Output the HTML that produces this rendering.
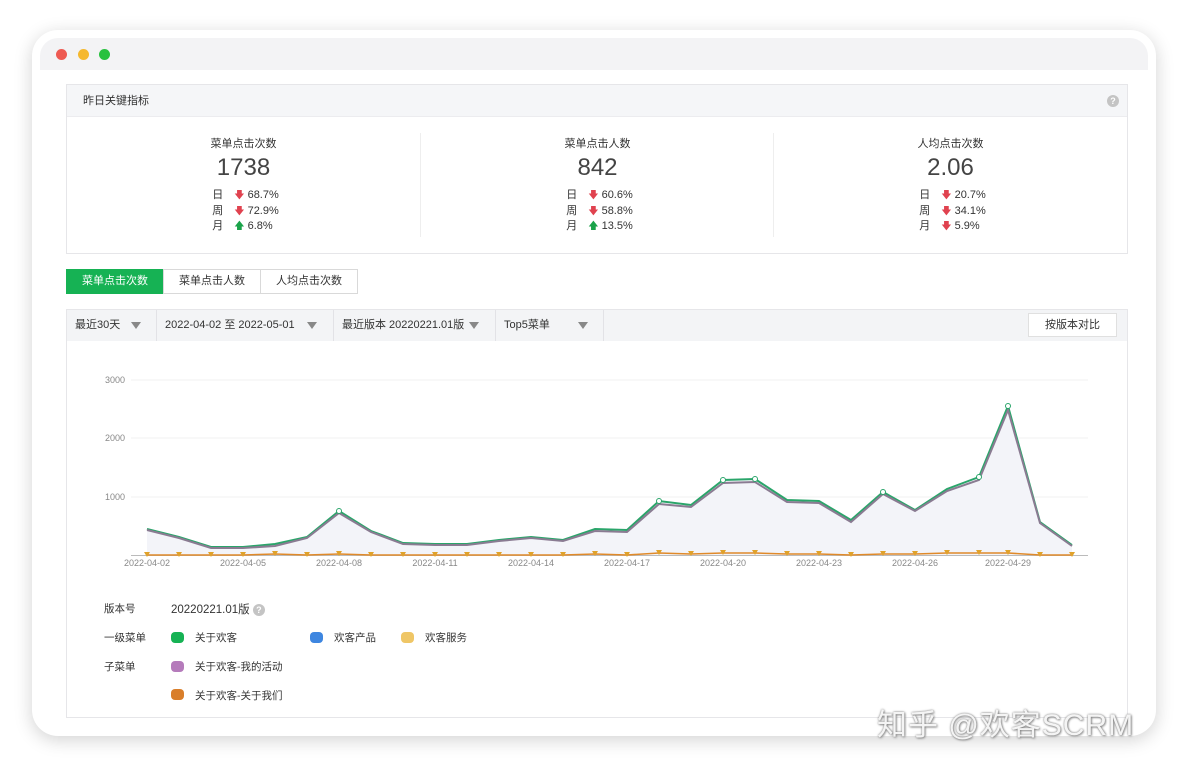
<!DOCTYPE html>
<html><head><meta charset="utf-8">
<style>
*{margin:0;padding:0;box-sizing:border-box}
body{width:1184px;height:766px;background:#fff;font-family:"Liberation Sans","Noto Sans CJK SC",sans-serif;color:#333;position:relative;overflow:hidden}
.frame{position:absolute;left:32px;top:30px;width:1124px;height:706px;background:#fff;border-radius:26px;box-shadow:0 4px 18px rgba(0,0,0,.18);overflow:hidden}
.bar{position:absolute;left:8px;top:8px;right:8px;height:32px;background:#f3f3f5;border-radius:18px 18px 0 0}
.dot{position:absolute;top:19px;width:11px;height:11px;border-radius:50%}
.panel{position:absolute;left:34px;top:54px;width:1062px;height:170px;border:1px solid #e6e6e9}
.ph{height:32px;background:#f5f6f8;border-bottom:1px solid #ececef;font-size:11px;line-height:32px;padding-left:16px;color:#333}
.q{position:absolute;right:8px;top:10px;width:12px;height:12px;border-radius:50%;background:#c4c4c4;color:#fff;font-size:9px;text-align:center;line-height:12px;font-weight:bold}
.col{position:absolute;top:32px;width:353px;height:137px;text-align:center}
.col .t{font-size:11px;margin-top:18px}
.col .n{font-size:24px;margin-top:3px;color:#444}
.rows{font-size:11px;line-height:15.5px;text-align:left;display:inline-block;white-space:nowrap;margin:6px 0 0 4px}
.rows b{font-weight:normal;display:inline-block;width:22px}
.dn{color:#e0424f;font-size:10px}.up{color:#1aa34a;font-size:10px}
.sep{position:absolute;top:48px;width:1px;height:104px;background:#eee}
.tabs{position:absolute;left:34px;top:239px;height:25px;display:flex;font-size:11px}
.tabs div{border:1px solid #d9d9d9;line-height:23px;padding:0 15px;margin-left:-1px;color:#333}
.tabs .a{background:#16b254;border-color:#16b254;color:#fff;margin-left:0}
.main{position:absolute;left:34px;top:279px;width:1062px;height:409px;border:1px solid #e6e6e9}
.fb{height:31px;background:#f3f4f6;display:flex;font-size:11px;line-height:31px;position:relative}
.fb div{padding:0 8px;border-right:1px solid #e2e2e6;position:relative}
.tri{display:inline-block;width:0;height:0;border-left:5px solid transparent;border-right:5px solid transparent;border-top:7px solid #888;vertical-align:middle}
.cmp{position:absolute;right:10px;top:3px;height:24px;background:#fff;border:1px solid #e0e0e0;line-height:22px;padding:0 16px;font-size:11px}
.lg{position:absolute;font-size:10.5px;color:#333}
.sw{position:absolute;width:13px;height:11px;border-radius:4px}
.wm{position:absolute;left:877px;top:700px;font-size:30px;color:#f4f4f4;text-shadow:0 0 2px #777,1px 1px 2px #999;letter-spacing:1px;font-family:"Liberation Sans","Noto Sans CJK SC",sans-serif}
</style></head><body>
<div class="frame">
<div class="bar"></div>
<div class="dot" style="left:24px;background:#ee5a52"></div>
<div class="dot" style="left:46px;background:#f5b82e"></div>
<div class="dot" style="left:67px;background:#28c13f"></div>
<div class="panel">
<div class="ph">昨日关键指标</div><div class="q">?</div>
<div class="col" style="left:0"><div class="t">菜单点击次数</div><div class="n">1738</div>
<div class="rows"><b>日</b><span class="dn">🡇</span> 68.7%<br><b>周</b><span class="dn">🡇</span> 72.9%<br><b>月</b><span class="up">🡅</span> 6.8%</div></div>
<div class="sep" style="left:353px"></div>
<div class="col" style="left:354px"><div class="t">菜单点击人数</div><div class="n">842</div>
<div class="rows"><b>日</b><span class="dn">🡇</span> 60.6%<br><b>周</b><span class="dn">🡇</span> 58.8%<br><b>月</b><span class="up">🡅</span> 13.5%</div></div>
<div class="sep" style="left:706px"></div>
<div class="col" style="left:707px"><div class="t">人均点击次数</div><div class="n">2.06</div>
<div class="rows"><b>日</b><span class="dn">🡇</span> 20.7%<br><b>周</b><span class="dn">🡇</span> 34.1%<br><b>月</b><span class="dn">🡇</span> 5.9%</div></div>
</div>
<div class="tabs"><div class="a">菜单点击次数</div><div>菜单点击人数</div><div>人均点击次数</div></div>
<div class="main">
<div class="fb">
<div style="width:90px">最近30天 <span class="tri" style="position:absolute;left:64px;top:12px"></span></div>
<div style="width:177px">2022-04-02 至 2022-05-01 <span class="tri" style="position:absolute;left:150px;top:12px"></span></div>
<div style="width:162px">最近版本 20220221.01版 <span class="tri" style="position:absolute;left:135px;top:12px"></span></div>
<div style="width:108px">Top5菜单 <span class="tri" style="position:absolute;left:82px;top:12px"></span></div>
<span class="cmp">按版本对比</span>
</div>
</div>
<div class="lg" style="left:72px;top:571px">版本号</div><div class="lg" style="left:139px;top:571px;font-size:11.5px">20220221.01版 <span style="display:inline-block;width:12px;height:12px;border-radius:50%;background:#c4c4c4;color:#fff;font-size:9px;text-align:center;line-height:12px;font-weight:bold">?</span></div>
<div class="lg" style="left:72px;top:600px">一级菜单</div>
<div class="sw" style="left:139px;top:602px;background:#16b254"></div><div class="lg" style="left:163px;top:600px">关于欢客</div>
<div class="sw" style="left:278px;top:602px;background:#3e86e0"></div><div class="lg" style="left:302px;top:600px">欢客产品</div>
<div class="sw" style="left:369px;top:602px;background:#efc666"></div><div class="lg" style="left:393px;top:600px">欢客服务</div>
<div class="lg" style="left:72px;top:629px">子菜单</div>
<div class="sw" style="left:139px;top:631px;background:#b57bbb"></div><div class="lg" style="left:163px;top:629px">关于欢客-我的活动</div>
<div class="sw" style="left:139px;top:659px;background:#d97e2a"></div><div class="lg" style="left:163px;top:658px">关于欢客-关于我们</div>
</div>
<svg width="1184" height="766" style="position:absolute;left:0;top:0" font-family="Liberation Sans" font-size="9" fill="#888">
<g stroke="#f0f0f0"><line x1="131" y1="380" x2="1088" y2="380"/><line x1="131" y1="438" x2="1088" y2="438"/><line x1="131" y1="497" x2="1088" y2="497"/></g>
<line x1="131" y1="555.5" x2="1088" y2="555.5" stroke="#bbb"/>
<text x="105" y="383">3000</text><text x="105" y="441">2000</text><text x="105" y="500">1000</text>
<g text-anchor="middle"><text x="147" y="566">2022-04-02</text><text x="243" y="566">2022-04-05</text><text x="339" y="566">2022-04-08</text><text x="435" y="566">2022-04-11</text><text x="531" y="566">2022-04-14</text><text x="627" y="566">2022-04-17</text><text x="723" y="566">2022-04-20</text><text x="819" y="566">2022-04-23</text><text x="915" y="566">2022-04-26</text><text x="1008" y="566">2022-04-29</text></g>
<polygon fill="#f3f4f9" points="147,555 147,529 179,537 211,547 243,547 275,544 307,537 339,511 371,531 403,543 435,544 467,544 499,540 531,537 563,540 595,529 627,530 659,501 691,505 723,480 755,479 787,500 819,501 851,520 883,492 915,510 947,489 979,477 1008,406 1040,522 1072,545 1072,555"/>
<polyline fill="none" stroke="#2aa56a" stroke-width="2" points="147,529 179,537 211,547 243,547 275,544 307,537 339,511 371,531 403,543 435,544 467,544 499,540 531,537 563,540 595,529 627,530 659,501 691,505 723,480 755,479 787,500 819,501 851,520 883,492 915,510 947,489 979,477 1008,406 1040,522 1072,545"/>
<polyline fill="none" stroke="#8a7b92" stroke-width="2" points="147,530 179,538 211,548 243,548 275,546 307,538 339,513 371,532 403,544 435,545 467,545 499,541 531,538 563,541 595,531 627,532 659,504 691,507 723,483 755,482 787,502 819,503 851,522 883,494 915,511 947,491 979,480 1008,410 1040,523 1072,546"/>
<polyline fill="none" stroke="#e08a2a" stroke-width="1.5" points="147,555 179,555 211,555 243,555 275,554 307,555 339,554 371,555 403,555 435,555 467,555 499,555 531,555 563,555 595,554 627,555 659,553 691,554 723,553 755,553 787,554 819,554 851,555 883,554 915,554 947,553 979,553 1008,553 1040,555 1072,555"/>
<g fill="#e0a22a"><path d="M144,552h6l-3,5z M176,552h6l-3,5z M208,552h6l-3,5z M240,552h6l-3,5z M272,551h6l-3,5z M304,552h6l-3,5z M336,551h6l-3,5z M368,552h6l-3,5z M400,552h6l-3,5z M432,552h6l-3,5z M464,552h6l-3,5z M496,552h6l-3,5z M528,552h6l-3,5z M560,552h6l-3,5z M592,551h6l-3,5z M624,552h6l-3,5z M656,550h6l-3,5z M688,551h6l-3,5z M720,550h6l-3,5z M752,550h6l-3,5z M784,551h6l-3,5z M816,551h6l-3,5z M848,552h6l-3,5z M880,551h6l-3,5z M912,551h6l-3,5z M944,550h6l-3,5z M976,550h6l-3,5z M1005,550h6l-3,5z M1037,552h6l-3,5z M1069,552h6l-3,5z"/></g>
<g fill="#fff" stroke="#2aa56a" stroke-width="1"><circle cx="339" cy="511" r="2.5"/><circle cx="1008" cy="406" r="2.5"/><circle cx="659" cy="501" r="2.5"/><circle cx="723" cy="480" r="2.5"/><circle cx="755" cy="479" r="2.5"/><circle cx="883" cy="492" r="2.5"/><circle cx="979" cy="477" r="2.5"/></g>
</svg>
<div class="wm">知乎 @欢客SCRM</div>
</body></html>
